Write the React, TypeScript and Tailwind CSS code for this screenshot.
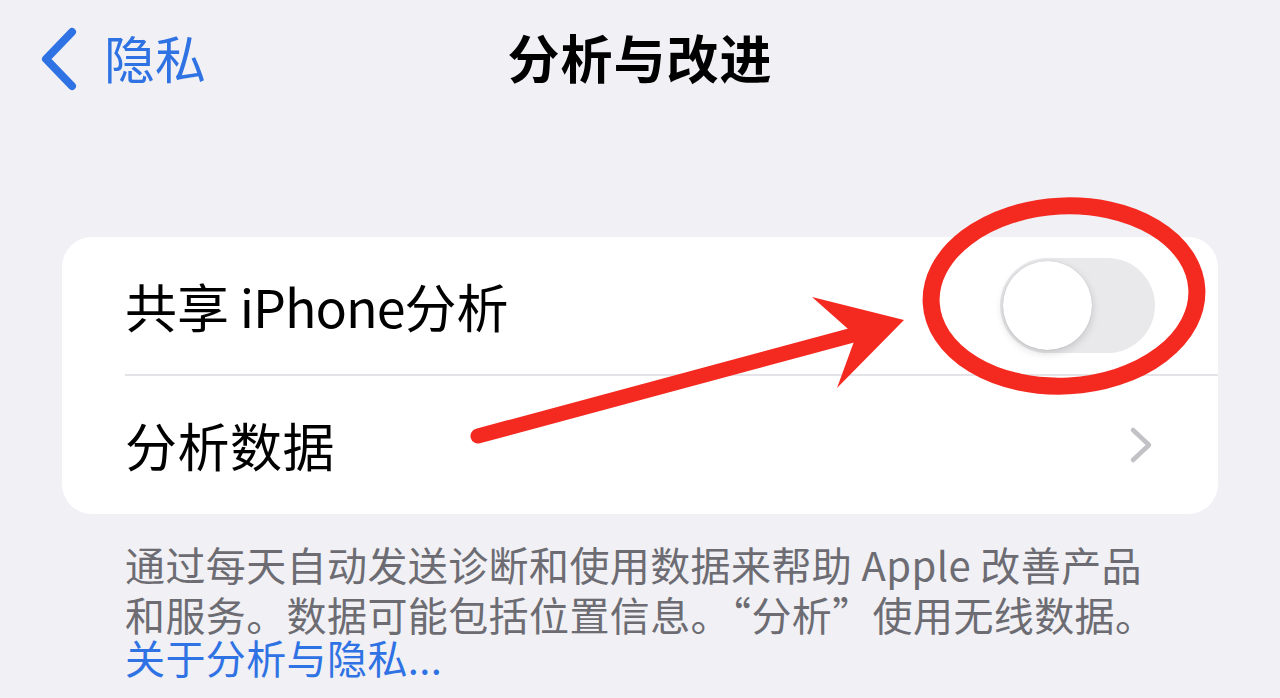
import React from "react";

const font = { fontFamily: '"Noto Sans CJK SC", "Noto Sans", sans-serif' };

function Toggle() {
  return (
    <div className="relative w-[155px] h-[95px] rounded-full bg-[#e9e9ec] shrink-0">
      <div className="absolute left-[3px] top-[3px] w-[89px] h-[89px] rounded-full bg-white shadow-[0_3px_8px_rgba(0,0,0,0.16),0_0_1px_rgba(0,0,0,0.2)]" />
    </div>
  );
}

export default function App() {
  return (
    <div
      className="relative w-[1280px] h-[698px] overflow-hidden bg-[#f0f0f5] text-black"
      style={font}
    >
      {/* Nav bar */}
      <div className="relative h-[120px] flex items-center justify-center">
        <div className="absolute left-[40px] top-[26px] flex items-center gap-[26px] text-[#2f72e4]">
          <svg width="38" height="66" viewBox="0 0 38 66" fill="none">
            <path d="M32 6 L6 33 L32 60" stroke="#2f72e4" strokeWidth="8" strokeLinecap="round" strokeLinejoin="round" />
          </svg>
          <span className="text-[51px] leading-none -mt-[4px]">隐私</span>
        </div>
        <h1 className="text-[52px] font-bold leading-none -mt-[6px] tracking-[1px]">分析与改进</h1>
      </div>

      {/* Card */}
      <div className="ml-[62px] mt-[117px] w-[1156px] rounded-[30px] bg-white">
        <div className="h-[137px] flex items-center justify-between pl-[63px] pr-[63px]">
          <span className="text-[52px] leading-none">
            共享<span className="tracking-[-1px]"> iPhone</span>分析
          </span>
          <Toggle />
        </div>
        <div className="ml-[63px] h-[2px] bg-[#e4e4e8]" />
        <div className="h-[138px] flex items-center justify-between pl-[63px] pr-[65px]">
          <span className="text-[52px] leading-none tracking-[0.5px]">分析数据</span>
          <svg width="24" height="38" viewBox="0 0 24 38" fill="none">
            <path d="M4 4 L20 19 L4 34" stroke="#c2c2c6" strokeWidth="4.5" strokeLinecap="round" strokeLinejoin="round" />
          </svg>
        </div>
      </div>

      {/* Footer */}
      <div className="ml-[125px] mt-[25px] w-[1060px] text-[40px] leading-[50px] tracking-[0.4px] text-[#6c6c72]">
        <p>通过每天自动发送诊断和使用数据来帮助 Apple 改善产品</p>
        <p>和服务。数据可能包括位置信息。“分析”使用无线数据。</p>
        <p className="text-[#2f72e4] leading-[36px]">关于分析与隐私...</p>
      </div>

      {/* Annotation overlay */}
      <svg
        className="absolute inset-0 pointer-events-none"
        width="1280"
        height="698"
        viewBox="0 0 1280 698"
      >
        <ellipse
          cx="1064"
          cy="296"
          rx="133"
          ry="90"
          fill="none"
          stroke="#f42a20"
          strokeWidth="17"
          transform="rotate(-3 1064 296)"
        />
        <line x1="478" y1="436" x2="868" y2="331" stroke="#f42a20" strokeWidth="15" strokeLinecap="round" />
        <polygon points="812,297 904,320 837,388 856,336" fill="#f42a20" />
      </svg>
    </div>
  );
}
